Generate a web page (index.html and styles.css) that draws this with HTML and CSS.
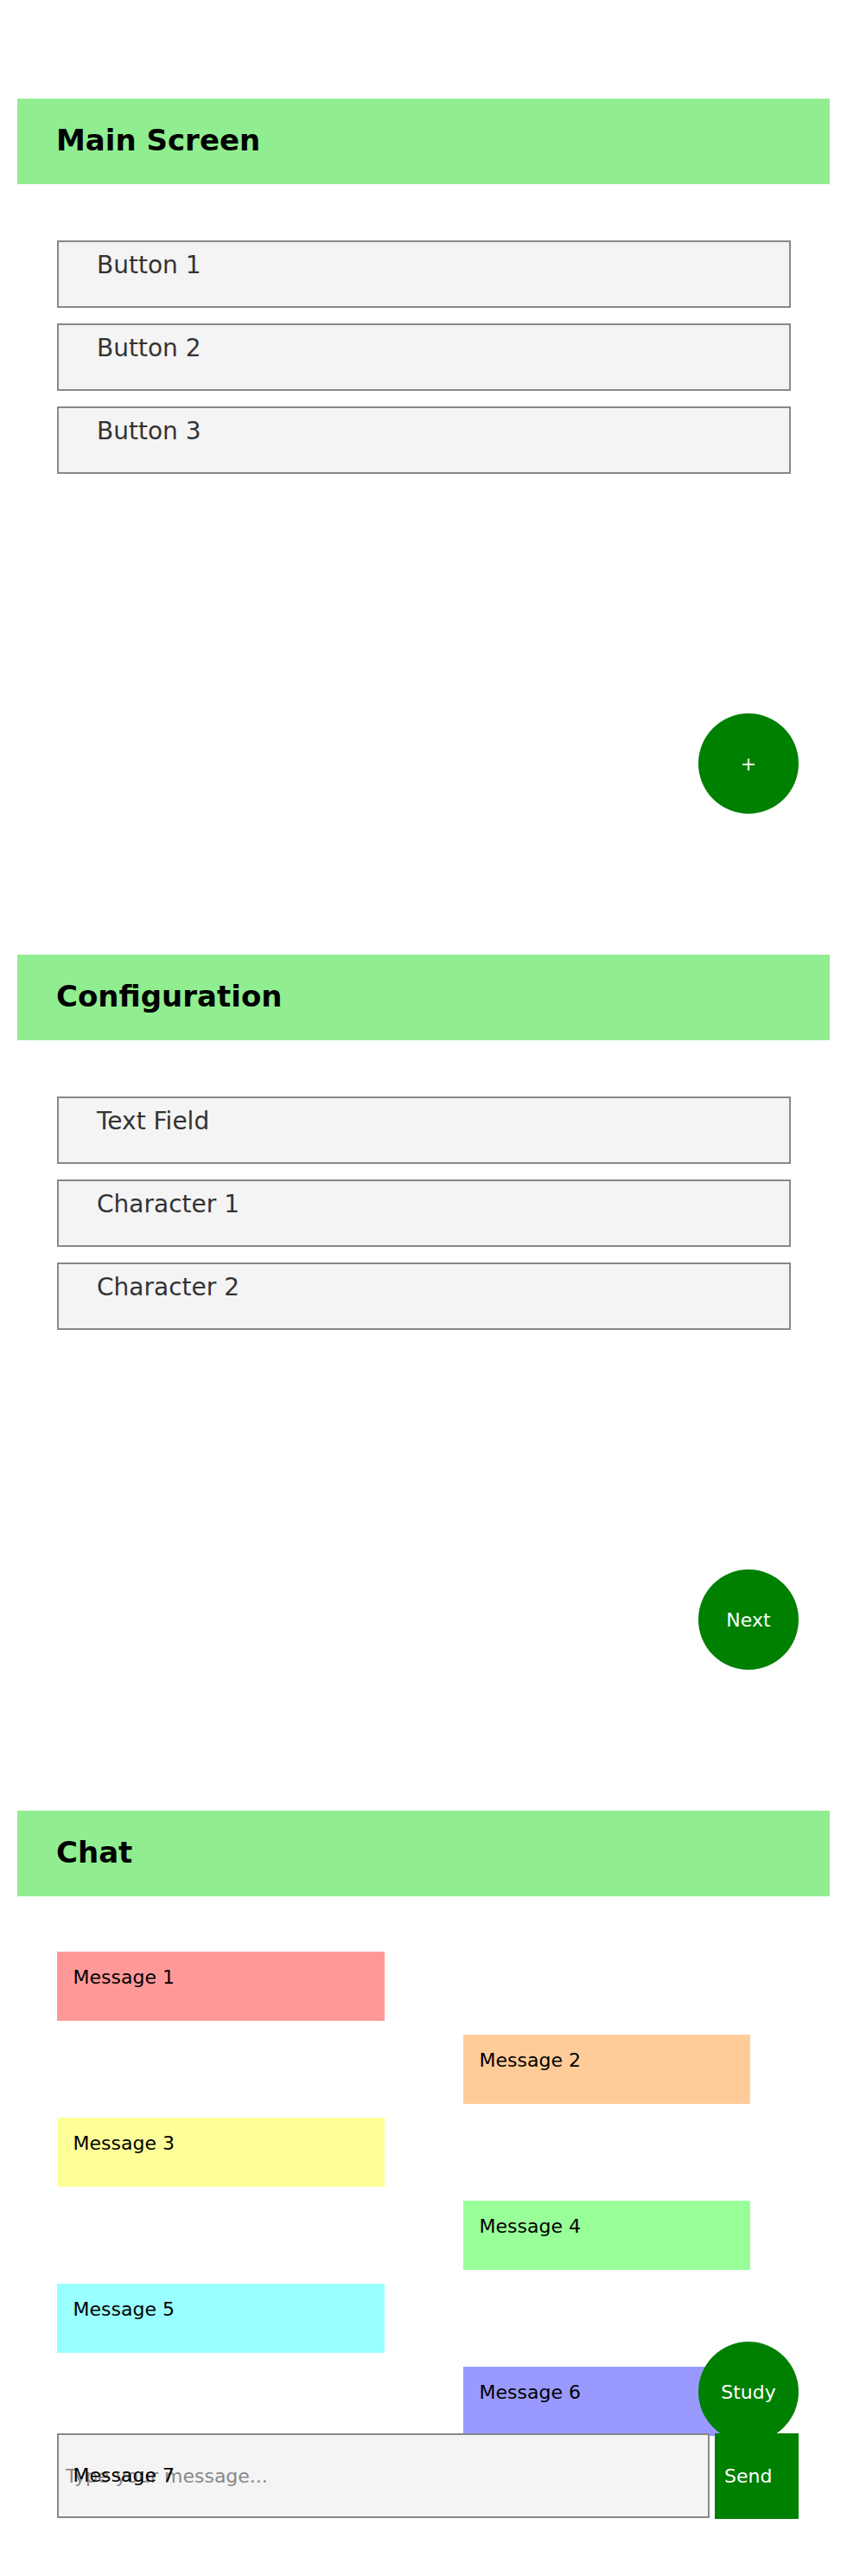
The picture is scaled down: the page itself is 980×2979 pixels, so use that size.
FILE: index.html
```html
<!DOCTYPE html>
<html lang="en">
<head>
<meta charset="utf-8">
<title>Screens</title>
<link rel="stylesheet" href="styles.css">
</head>
<body>
<section class="screen">
  <header class="bar"><h1>Main Screen</h1></header>
  <div class="list">
    <button class="item">Button 1</button>
    <button class="item">Button 2</button>
    <button class="item">Button 3</button>
  </div>
  <button class="fab">+</button>
</section>

<section class="screen">
  <header class="bar"><h1>Configuration</h1></header>
  <div class="list">
    <button class="item">Text Field</button>
    <button class="item">Character 1</button>
    <button class="item">Character 2</button>
  </div>
  <button class="fab">Next</button>
</section>

<section class="screen">
  <header class="bar"><h1>Chat</h1></header>
  <div class="messages">
    <div class="msg left c1">Message 1</div>
    <div class="msg right c2">Message 2</div>
    <div class="msg left c3">Message 3</div>
    <div class="msg right c4">Message 4</div>
    <div class="msg left c5">Message 5</div>
    <div class="msg right c6">Message 6</div>
    <div class="msg left overlay">Message 7</div>
  </div>
  <button class="fab study">Study</button>
  <div class="composer">
    <input class="field" type="text" placeholder="Type your message...">
    <button class="send">Send</button>
  </div>
</section>
</body>
</html>
```
FILE: styles.css
```css
body {
  margin: 0;
  background: #fff;
  font-family: "DejaVu Sans", sans-serif;
}

.screen {
  position: relative;
  height: 990px;
  padding-top: 114px;
  box-sizing: border-box;
}

.bar {
  margin: 0 20px;
  height: 99px;
  box-sizing: border-box;
  padding: 27.5px 0 0 45px;
  background: #90ee90;
}

.bar h1 {
  margin: 0;
  font-size: 34px;
  font-weight: bold;
  line-height: normal;
  color: #000;
}

.list {
  margin: 65px 65px 0 66px;
  display: flex;
  flex-direction: column;
  gap: 18px;
}

.item {
  display: block;
  width: 100%;
  height: 78px;
  box-sizing: border-box;
  margin: 0;
  border: 2px solid #888;
  background: #f4f4f4;
  padding: 10px 44px 0;
  font-family: "DejaVu Sans", sans-serif;
  font-size: 28px;
  line-height: normal;
  color: #333;
  text-align: left;
  vertical-align: top;
}

.item {
  display: flex;
  align-items: flex-start;
}

.fab {
  position: absolute;
  left: 808px;
  top: 825px;
  width: 116px;
  height: 116px;
  margin: 0;
  padding: 0;
  border: none;
  border-radius: 50%;
  background: #008000;
  color: #fff;
  font-family: "DejaVu Sans", sans-serif;
  font-size: 22px;
  display: flex;
  align-items: center;
  justify-content: center;
}

.fab.study {
  top: 728px;
}

.messages {
  margin: 64px 0 0 66px;
  display: flex;
  flex-direction: column;
  gap: 16px;
}

.msg {
  height: 80px;
  box-sizing: border-box;
  padding: 17px 18.5px 0;
  font-size: 22px;
  line-height: normal;
  color: #000;
}

.msg.left { width: 379px; }
.msg.right { width: 332px; margin-left: 470px; }

.c1 { background: #ff9999; }
.c2 { background: #ffcc99; }
.c3 { background: #ffff99; }
.c4 { background: #99ff99; }
.c5 { background: #99ffff; }
.c6 { background: #9999ff; }

.msg.overlay {
  position: relative;
  z-index: 1;
}

.composer {
  position: absolute;
  left: 66px;
  top: 834px;
  display: flex;
  align-items: flex-start;
  gap: 6px;
}

.field {
  width: 755px;
  height: 98px;
  box-sizing: border-box;
  margin: 0;
  border: 2px solid #888;
  background: #f4f4f4;
  padding: 0 8px;
  font-family: "DejaVu Sans", sans-serif;
  font-size: 22px;
  color: #000;
  outline: none;
}

.field::placeholder {
  color: #888;
  opacity: 1;
}

.send {
  width: 97px;
  height: 99px;
  box-sizing: border-box;
  margin: 0;
  border: none;
  background: #008000;
  color: #fff;
  padding: 0 0 0 11px;
  font-family: "DejaVu Sans", sans-serif;
  font-size: 22px;
  text-align: left;
}
```
